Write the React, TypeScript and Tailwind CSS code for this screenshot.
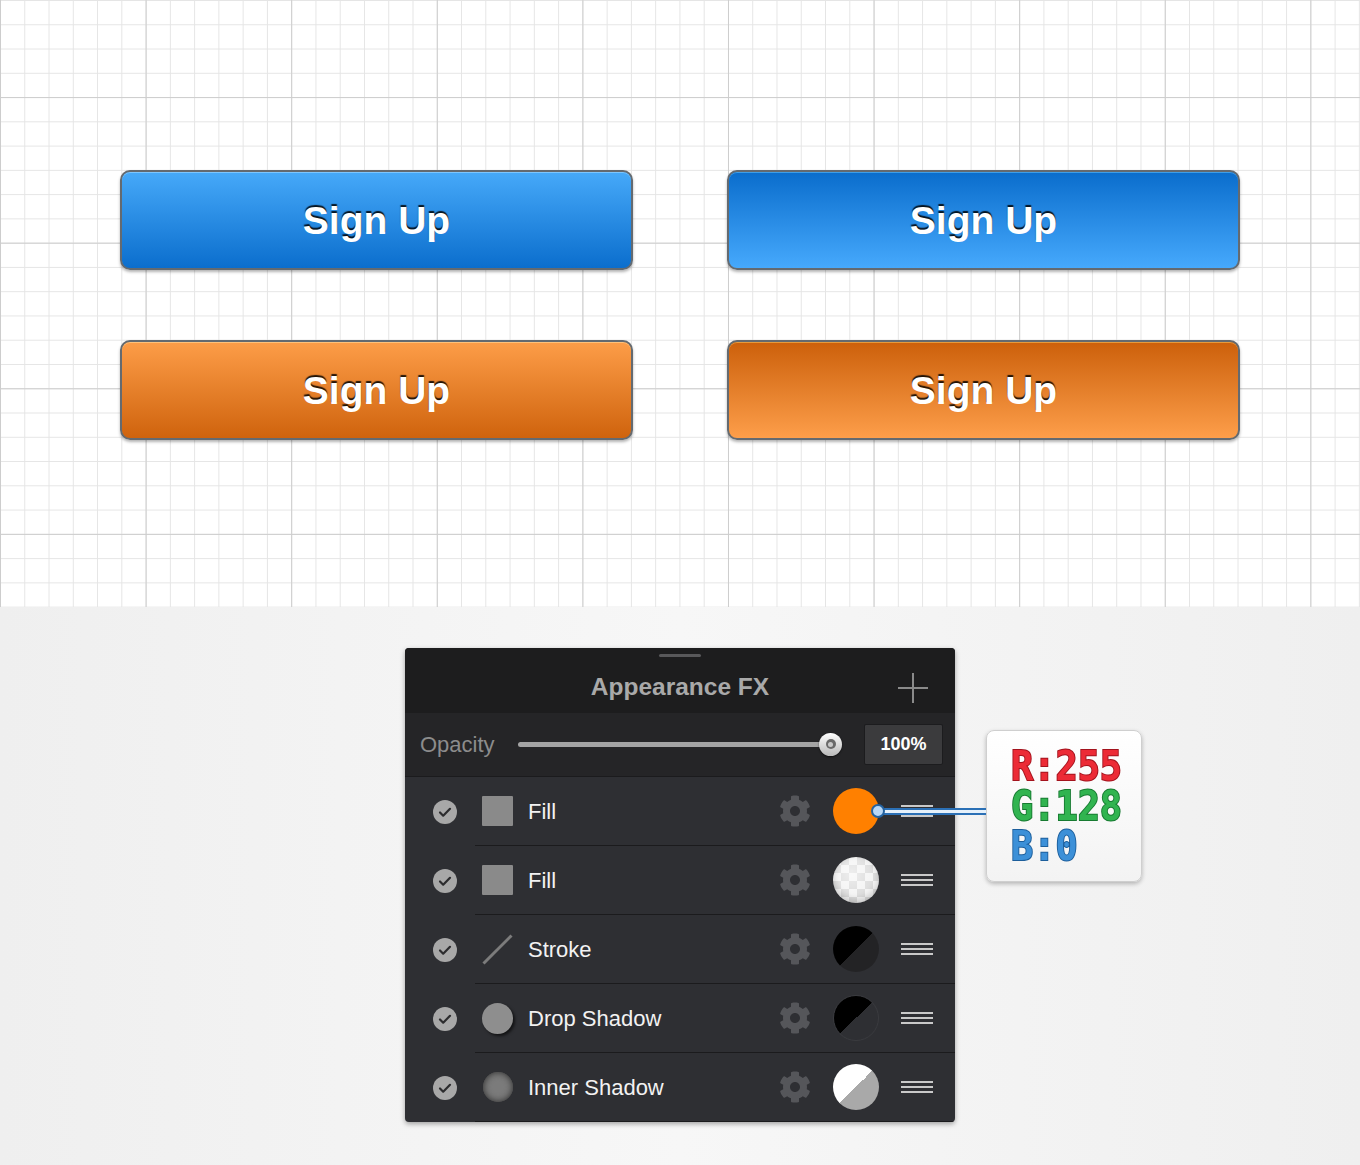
import { FaCog } from 'react-icons/fa'

type BtnProps = { grad: string; edge: string }

function SignUpButton({ grad, edge }: BtnProps) {
  return (
    <div
      className={`h-[100px] rounded-[10px] border-2 border-[#646a70] flex items-center justify-center ${grad} ${edge}`}
    >
      <span className="text-white font-bold text-[39px] leading-none [text-shadow:0_-2px_1px_rgba(0,0,0,0.85)]">
        Sign Up
      </span>
    </div>
  )
}

function Check() {
  return (
    <svg width="24" height="24" viewBox="0 0 24 24">
      <circle cx="12" cy="12" r="12" fill="#a8a8a8" />
      <path d="M7 12.5l3.2 3.2L17 8.8" fill="none" stroke="#2c2c2e" strokeWidth="2.2" strokeLinecap="round" strokeLinejoin="round" />
    </svg>
  )
}

function Hamburger() {
  return (
    <div className="w-[32px] flex flex-col gap-[3px]">
      <div className="h-[2px] bg-[#c9c9c9]" />
      <div className="h-[2px] bg-[#c9c9c9]" />
      <div className="h-[2px] bg-[#c9c9c9]" />
    </div>
  )
}

const rows = [
  { label: 'Fill', icon: 'square', swatch: 'bg-[#ff8000]' },
  {
    label: 'Fill',
    icon: 'square',
    swatch:
      'bg-white [background-image:radial-gradient(circle_at_40%_35%,rgba(255,255,255,0.5),rgba(255,255,255,0)_60%),repeating-conic-gradient(#dcdcdc_0_25%,#f4f4f4_0_50%)] [background-size:100%_100%,16px_16px] shadow-[inset_0_-3px_6px_rgba(0,0,0,0.18)]',
  },
  { label: 'Stroke', icon: 'stroke', swatch: 'bg-[linear-gradient(135deg,#000_50%,#232325_50%)]' },
  {
    label: 'Drop Shadow',
    icon: 'drop',
    swatch: 'bg-[linear-gradient(135deg,#000_50%,#2e2f33_50%)] border border-[#3a3b3f]',
  },
  { label: 'Inner Shadow', icon: 'inner', swatch: 'bg-[linear-gradient(135deg,#fff_50%,#a9a9a9_50%)]' },
]

function RowIcon({ kind }: { kind: string }) {
  if (kind === 'square') return <div className="w-[31px] h-[30px] rounded-[1px] bg-[#8a8a8a]" />
  if (kind === 'stroke')
    return (
      <svg width="31" height="31" viewBox="0 0 31 31">
        <line x1="1.5" y1="29.5" x2="29.5" y2="1.5" stroke="#7c7c7c" strokeWidth="3" />
      </svg>
    )
  if (kind === 'drop')
    return <div className="w-[31px] h-[31px] rounded-full bg-[#8e8e8e] shadow-[2px_2px_3px_rgba(0,0,0,0.6)]" />
  return <div className="w-[30px] h-[30px] rounded-full bg-[#7b7b7b] shadow-[inset_0_0_7px_#2a2a2a] blur-[0.6px]" />
}

export default function App() {
  return (
    <div className="w-[1360px] h-[1165px] overflow-hidden font-['Liberation_Sans',Arial,sans-serif]">
      {/* canvas */}
      <div className="h-[607px] bg-white [background-image:linear-gradient(to_right,#cdcdcd_1px,transparent_1px),linear-gradient(to_bottom,#cdcdcd_1px,transparent_1px),linear-gradient(to_right,#e5e5e5_1px,transparent_1px),linear-gradient(to_bottom,#e5e5e5_1px,transparent_1px)] [background-size:145.6px_145.6px,145.6px_145.6px,24.27px_24.27px,24.27px_24.27px] [background-position:0_0,0_97.1px,0_0,0_0] pt-[170px] pl-[120px]">
        <div className="grid grid-cols-[513px_513px] gap-x-[94px] gap-y-[70px]">
          <SignUpButton grad="bg-[linear-gradient(to_bottom,#46a9f9,#0b6ecd)]" edge="shadow-[inset_0_1px_0_#7cc6ff,0_2px_3px_rgba(0,0,0,0.3)]" />
          <SignUpButton grad="bg-[linear-gradient(to_bottom,#0a6dcc,#46a9fc)]" edge="shadow-[inset_0_1px_0_#3e9ee8,0_2px_3px_rgba(0,0,0,0.3)]" />
          <SignUpButton grad="bg-[linear-gradient(to_bottom,#fd9d48,#cf630d)]" edge="shadow-[inset_0_1px_0_#ffc27a,0_2px_3px_rgba(0,0,0,0.3)]" />
          <SignUpButton grad="bg-[linear-gradient(to_bottom,#cc600b,#fd9e4a)]" edge="shadow-[inset_0_1px_0_#e69a3c,0_2px_3px_rgba(0,0,0,0.3)]" />
        </div>
      </div>

      {/* panel area */}
      <div className="relative h-[558px] bg-[linear-gradient(to_right,#efefef,#f7f7f7_50%,#efefef)] flex items-start pl-[405px] pt-[41px]">
        <div className="w-[550px] rounded-[4px] overflow-hidden bg-[#2e2f33] shadow-[0_2px_5px_rgba(0,0,0,0.35)]">
          {/* header */}
          <div className="relative h-[65px] bg-[#1d1d1e] flex items-center justify-center">
            <div className="absolute top-[6px] left-[254px] w-[42px] h-[3px] rounded-full bg-[#58585a]" />
            <span className="text-[#a9a9a9] font-bold text-[24.5px] mt-[14px]">Appearance FX</span>
            <div className="absolute right-[27px] top-[25px] w-[30px] h-[30px]">
              <div className="absolute left-[14px] top-0 w-[1.5px] h-[30px] bg-[#8a8a8a]" />
              <div className="absolute top-[14px] left-0 h-[1.5px] w-[30px] bg-[#8a8a8a]" />
            </div>
          </div>

          {/* opacity */}
          <div className="h-[63px] bg-[#252527] flex items-center pl-[15px] pr-[12px]">
            <span className="text-[#8c8c8c] text-[22px] w-[98px]">Opacity</span>
            <div className="relative w-[324px] h-[24px] flex items-center">
              <div className="h-[5px] w-[313px] rounded-full bg-[#a4a4a4]" />
              <div className="absolute right-0 top-0 w-[23px] h-[23px] rounded-full bg-[linear-gradient(to_bottom,#ffffff,#b9b9b9)] shadow-[0_1px_2px_rgba(0,0,0,0.6)] flex items-center justify-center">
                <div className="w-[10px] h-[10px] rounded-full bg-[#6a6a6a] flex items-center justify-center">
                  <div className="w-[5px] h-[5px] rounded-full bg-[#c9c9c9]" />
                </div>
              </div>
            </div>
            <div className="ml-auto w-[79px] h-[41px] rounded-[2px] bg-[#3b3b3d] border border-[#1c1c1e] flex items-center justify-center text-white font-bold text-[18px]">
              100%
            </div>
          </div>

          {/* rows */}
          <div className="border-t border-[#1b1b1d]">
            {rows.map((r, i) => (
              <div key={i} className="h-[69px] flex">
                <div className="w-[70px] flex items-center pl-[28px]">
                  <Check />
                </div>
                <div className="flex-1 flex items-center border-b border-[#1b1b1d] pl-[7px] pr-[22px]">
                  <div className="w-[31px] flex items-center justify-center">
                    <RowIcon kind={r.icon} />
                  </div>
                  <span className="ml-[15px] text-[#f2f2f2] text-[22px]">{r.label}</span>
                  <FaCog className="ml-auto text-[#55565a]" size={32} />
                  <div className={`ml-[22px] w-[46px] h-[46px] rounded-full ${r.swatch}`} />
                  <div className="ml-[22px]">
                    <Hamburger />
                  </div>
                </div>
              </div>
            ))}
          </div>
        </div>

        {/* connector */}
        <div className="absolute left-[878px] top-[201px] w-[108px] h-[7px] border-y-2 border-[#2b70b6] bg-[#e6f1fb]" />
        <div className="absolute left-[871px] top-[197px] w-[14px] h-[14px] rounded-full bg-[#b9d8f6] border-2 border-[#24629f]" />

        {/* rgb callout */}
        <div className="ml-[31px] mt-[82px] w-[156px] h-[152px] rounded-[8px] border border-[#cfcfcf] bg-[linear-gradient(to_bottom,#ffffff,#f3f3f3)] shadow-[0_2px_4px_rgba(0,0,0,0.25)] pl-[24px] pt-[15px] font-['DejaVu_Sans_Mono',monospace] font-bold text-[41px] leading-[40px]">
          <div className="origin-left scale-x-[0.9] text-[#ec2b36] [-webkit-text-stroke:2px_#a3131d] [paint-order:stroke_fill]">R:255</div>
          <div className="origin-left scale-x-[0.9] text-[#31b450] [-webkit-text-stroke:2px_#177a31] [paint-order:stroke_fill]">G:128</div>
          <div className="origin-left scale-x-[0.9] text-[#3c90d8] [-webkit-text-stroke:2px_#1c5e9b] [paint-order:stroke_fill]">B:0</div>
        </div>
      </div>
    </div>
  )
}
